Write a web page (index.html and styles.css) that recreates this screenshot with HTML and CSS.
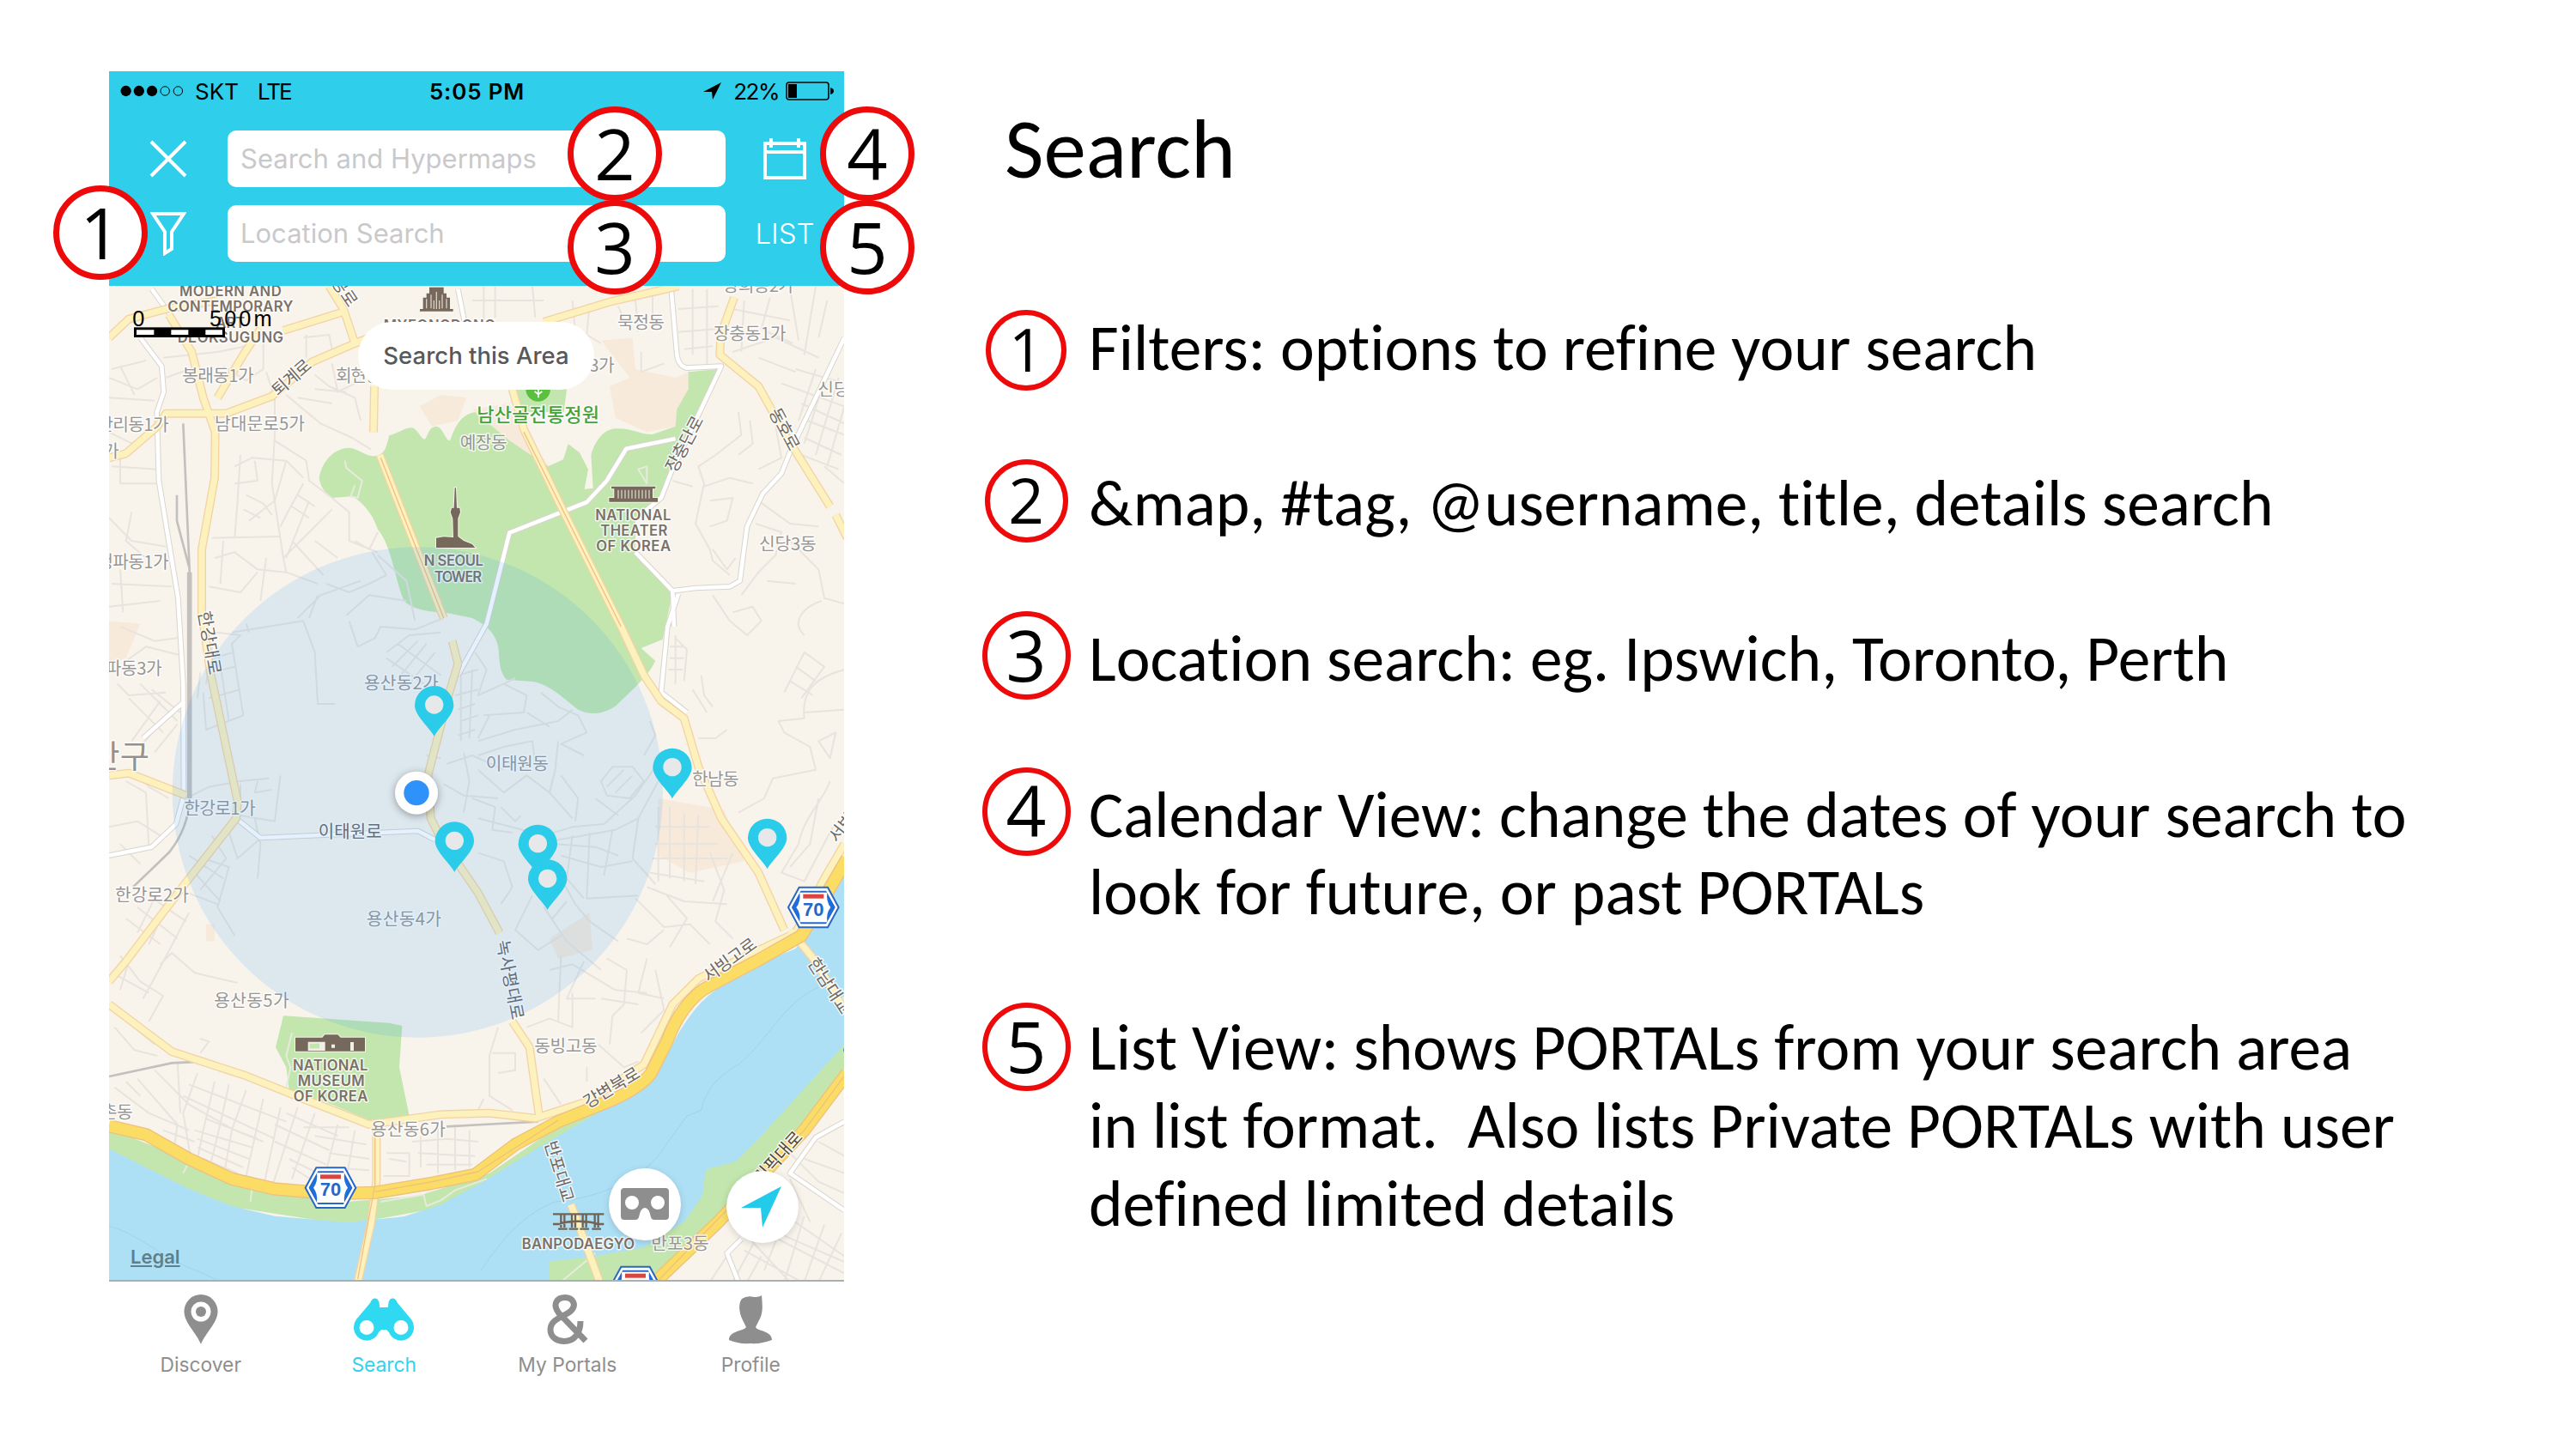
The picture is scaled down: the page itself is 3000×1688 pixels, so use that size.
FILE: index.html
```html
<!DOCTYPE html>
<html lang="en">
<head>
  <meta charset="UTF-8">
  <meta name="viewport" content="width=device-width, initial-scale=1.0">
  <title>Search</title>
  <link rel="stylesheet" href="styles.css">
</head>
<body>
  <div class="slide">
    <div class="phone">
      <div class="header">
        <div class="status-bar">
          <div class="carrier">
            <svg class="signal" width="74" height="14" viewBox="0 0 78 14">
              <circle cx="7" cy="7" r="6.500"/><circle cx="23" cy="7" r="6.500"/><circle cx="39" cy="7" r="6.500"/>
              <circle class="off" cx="55" cy="7" r="5.5"/><circle class="off" cx="71" cy="7" r="5.5"/>
            </svg>
            <span>SKT</span><span class="network">LTE</span>
          </div>
          <div class="time">5:05 PM</div>
          <div class="battery">
            <svg width="21" height="20" viewBox="0 0 21 20"><path d="M21 0 L0 11 L10 11 L11 20 Z"/></svg>
            <span>22%</span>
            <svg width="56" height="22" viewBox="0 0 56 22">
              <rect class="shell" x="1" y="1" width="49" height="20" rx="3"/>
              <rect x="3" y="3" width="10" height="16"/>
              <path d="M52 7 Q56 8 56 11 Q56 14 52 15 Z"/>
            </svg>
          </div>
        </div>
        <div class="search-row">
          <svg class="icon" width="46" height="46" viewBox="0 0 46 46"><path d="M3 3 L43 43 M43 3 L3 43"/></svg>
          <div class="search-input">Search and Hypermaps</div>
          <svg class="icon" width="50" height="50" viewBox="0 0 50 50">
            <path d="M2 7 H48 V47 H2 Z M2 17 H48 M9 1 V12 M41 1 V12"/>
          </svg>
        </div>
        <div class="search-row">
          <svg class="icon" width="42" height="52" viewBox="0 0 42 52"><path d="M3 3 H39 L25 24 V44 L17 49 V24 Z"/></svg>
          <div class="search-input">Location Search</div>
          <span class="list-btn">LIST</span>
        </div>
      </div>

      <div class="map">
        <svg width="856" height="1160" viewBox="21 9 2568 3480">
          <defs>
            <g id="pin">
              <path d="M0 0 C-12 -26 -68 -72 -68 -108 A68 68 0 0 1 68 -108 C68 -72 12 -26 0 0 Z"/>
              <circle cx="0" cy="-110" r="32" fill="#e6e8ea"/>
            </g>
            <g id="route70">
              <path d="M-88 0 L-50 -70 H50 L88 0 L50 70 H-50 Z" fill="#fff" stroke="#2a67c4" stroke-width="6"/>
              <path d="M-74 0 L-43 -56 H43 L74 0 L43 56 H-43 Z" fill="#1d6fe0" stroke="#2a67c4" stroke-width="4"/>
              <path d="M-48 -52 H48 Q44 -20 60 0 Q44 20 48 52 H-48 Q-44 20 -60 0 Q-44 -20 -48 -52 Z" fill="#fff"/>
              <rect x="-36" y="-46" width="72" height="15" fill="#d9463f"/>
              <text class="route-no" x="0" y="29">70</text>
            </g>
          </defs>

          <rect x="21" y="9" width="2568" height="3480" fill="#f8f4ec"/>

          <!-- built up areas -->
          <g class="area">
            <path d="M1105 430 L1180 390 L1270 400 L1240 480 L1150 500 Z"/>
            <path d="M1740 200 L1850 190 L1860 300 L2000 330 L2045 310 L2045 370 L2000 500 L1900 520 L1790 470 L1770 360 L1840 330 Z"/>
            <path d="M1410 550 L1290 440 L1420 420 L1500 560 L1560 640 L1480 620 Z"/>
            <path d="M21 1180 L130 1190 L80 1310 L21 1330 Z"/>
            <path d="M1940 1800 L2170 1840 L2240 2020 L2050 2060 L1940 2000 Z"/>
            <path d="M1560 2290 L1700 2200 L1710 2330 L1590 2360 Z"/>
            <path d="M360 2240 H390 V2300 H360 Z"/>
          </g>

          <!-- parks -->
          <g class="park">
            <path d="M755 680 C765 620 810 575 860 575 C890 578 910 598 940 604 C985 606 990 570 1000 532 C1030 525 1050 505 1080 505 C1100 510 1110 545 1125 545 C1140 520 1140 502 1165 500 C1190 505 1195 550 1212 550 C1225 520 1240 460 1300 450 L1420 550 L1480 590 L1555 640 L1608 616 L1625 562 L1665 592 L1695 650 L1682 720 L1712 716 L1705 600 C1715 560 1745 510 1790 508 C1850 505 1880 530 1920 528 L2000 500 L2005 440 L2045 370 L2045 310 L2150 300 L2080 460 L1980 660 L1945 750 L1860 830 L1860 940 L1970 1050 L1988 1090 L1955 1245 L1880 1275 L1930 1320 C1900 1380 1850 1420 1790 1478 C1740 1510 1700 1508 1660 1490 C1620 1460 1560 1400 1500 1392 L1410 1385 C1385 1360 1385 1320 1382 1280 C1375 1220 1330 1190 1290 1170 L1190 1150 C1130 1150 1075 1135 1052 1110 C1020 1040 1010 920 960 860 C940 800 900 760 870 745 L800 750 C775 730 760 715 755 680 Z"/>
            <path d="M1440 370 H1620 L1610 450 H1460 Z"/>
            <path d="M630 2560 L1000 2585 L1045 2595 L1035 2740 L1070 2910 L930 2925 L800 2870 L650 2820 L640 2740 L603 2670 Z"/>
            <path d="M21 2955 L290 3060 L440 3140 L620 3185 L850 3210 L1100 3190 L1350 3110 L1600 2940 L1870 2800 L1850 2840 L1500 3050 L1180 3230 L850 3290 L400 3220 L21 3040 Z"/>
            <path d="M2590 2600 L2250 2940 L2050 3060 L1900 3360 L1560 3400 V3490 H1930 L2200 3250 L2450 2960 L2590 2750 Z"/>
          </g>
          <path class="clearing" d="M1860 942 L1860 830 L1950 750 L1990 1070 L1970 1050 Z"/>

          <!-- Han river -->
          <path class="water" d="M21 3025 L140 3085 L300 3165 L450 3225 L600 3260 L850 3282 L1050 3262 L1180 3220 L1320 3145 L1490 3040 L1590 2980 L1850 2830 L1910 2780 L1990 2660 C2020 2600 2070 2520 2140 2470 L2290 2380 L2420 2325 L2460 2270 L2600 2030 V2650 L2290 2990 L2210 3070 L2110 3095 C2095 3130 2105 3160 2090 3195 L2030 3280 L1890 3370 L1690 3405 L1560 3418 V3490 H21 Z"/>
          <path class="contour" d="M21 3295 C120 3320 200 3400 300 3440 S380 3480 420 3490 M1320 3450 C1420 3300 1500 3240 1580 3210 C1800 3190 1930 3080 1960 3020 L2040 2910 L2090 2890 C2110 2800 2170 2760 2220 2730 C2330 2640 2370 2520 2500 2460"/>

          <!-- side streets -->
          <g class="street">
            <path d="M21 330 L120 370 L190 330 M21 400 L180 410 M60 290 L110 390 M30 300 L150 270 M210 260 L400 240 L500 220 M220 330 L330 290 M420 290 L500 340 L560 300 L560 180 M700 190 L790 180 L800 230 M710 180 V260 M570 310 L600 400 V530 L590 700 L630 960 L640 1010 L750 1050"/>
            <path d="M740 320 L790 360 L880 400 L900 480 M800 280 L820 380 L900 340 M740 370 L850 380 M640 390 L700 440 L760 490 L870 540 L935 580 M680 400 L800 420 M600 550 L710 620 L720 690 L800 750 L860 800 V900 L960 940"/>
            <path d="M460 640 L520 610 L640 620 L700 680 M480 600 L470 760 L460 890 M530 620 L540 690 L460 700 M640 620 L600 760 L510 830 M500 740 L560 770 L590 810 M490 790 L550 820 M700 700 L640 810 L620 850 M680 740 L740 780 M660 780 L720 820 M380 890 L620 885 M390 960 L460 940 L540 1000 L640 1010 M420 900 L410 1050 M370 1060 L480 1080 L540 1010 M570 960 L550 1110 M720 760 L640 960 M800 790 L690 900 L630 960 M740 900 L820 960 M660 900 L770 1020"/>
            <path d="M1090 1180 L1060 1040 L960 950 M900 1040 L760 1090 L680 1170 M940 940 L990 1020 L930 1050 L860 1080 L780 1050 M880 900 L930 930 L960 870 M1060 1110 L930 1090 L850 1160 M750 1090 L720 1170"/>
            <path d="M21 520 L100 560 L160 540 M30 640 L190 650 M60 600 V700 L190 700 M21 820 L100 900 L220 920 M100 800 L80 900 L150 960 M30 1050 L240 1060 M60 1000 L70 1150 M21 1130 L200 1110"/>
            <path d="M1290 60 H1540 M1330 10 V130 M1370 10 V120 M1500 10 L1510 120 M1640 60 L1650 170 M1700 70 L1690 180 L1740 210 M1800 80 L1820 130 M1860 60 L1870 170 M1920 30 V160 M2010 90 L2150 80 M2010 170 L2140 160 M2060 20 V250 M2110 20 V290 M2030 230 L2130 220 M2200 90 L2400 130 M2240 60 L2230 240 M2330 50 L2300 160 L2410 210 M2200 240 L2350 190 L2500 260 M2400 20 L2430 200 M2490 10 L2450 250 M2290 260 L2420 310 M2530 60 L2500 190 M1880 240 V310 L1960 280"/>
            <path d="M2370 350 L2590 430 M2420 300 L2590 350 M2440 420 L2590 490 M2460 480 L2590 530 M2450 540 L2580 600 M2440 600 L2570 650 M2490 300 L2430 480 M2530 310 L2450 560 M2570 330 L2490 600 M2590 430 L2530 640 M2520 640 L2590 700"/>
            <path d="M2220 450 L2230 530 L2140 600 L2080 640 L2100 700 L2070 840 L2120 930 L2130 970 L2190 1020 M2100 710 L2190 680 L2270 700 M2260 480 L2270 560 L2220 600 M2350 500 L2370 610 L2290 650 M2120 760 L2200 750 L2180 830 L2120 850 M2130 930 L2180 1000 L2210 960 M1990 690 L2060 710 M2280 840 L2370 870 L2350 950 L2290 1010 L2230 1090 M2290 760 L2400 840 L2500 850 M2130 1090 L2190 1180 L2250 1230 L2300 1180 L2270 1130 L2200 1150 M2400 900 L2500 1000 L2520 1100 L2590 1120 M2320 1040 L2420 1050 M2450 1230 C2400 1180 2450 1130 2510 1110"/>
            <path d="M2000 1240 L2040 1280 L2030 1390 M1980 1270 H2030 M1980 1310 H2030 M1975 1350 H2025 M2000 1230 V1400 M2090 1370 L2100 1440 L2130 1480 M2060 1420 L2110 1500 M2180 1560 L2140 1590 L2080 1590 M2380 1430 L2450 1290 L2520 1340 L2440 1450 M2400 1390 L2480 1440 M2420 1340 L2490 1390 M2590 1350 C2480 1380 2440 1430 2450 1520 L2360 1530 L2380 1570 L2470 1620 L2490 1700 L2340 1730 L2310 1800 L2220 1850 M2450 1500 L2590 1490 M2500 1600 L2560 1570 L2540 1660 Z M2540 1740 C2510 1820 2450 1860 2430 1960 L2370 2060 L2450 2090 L2550 1900 M2500 1800 L2470 1960 L2400 2040"/>
            <path d="M60 1200 L180 1250 L260 1240 M80 1320 L150 1270 L270 1300 M50 1400 L90 1440 L220 1430 M130 1400 L260 1530 M90 1450 L210 1570 M170 1420 L270 1500 M240 1490 L130 1620 M200 1460 L100 1600 M260 1540 L180 1640 M100 1700 L160 1760 L230 1800 M80 1740 L150 1780 L160 1970 M21 1900 L120 1880 L200 1930 M60 1960 L130 2030"/>
            <path d="M360 1400 L390 1220 L480 1230 L450 1260 L490 1510 L360 1560 L350 1430 M370 1450 L480 1420 M380 1360 L460 1340 M385 1310 L455 1290 M400 1270 L440 1530 M330 1450 L340 1360"/>
            <path d="M450 1220 L700 1180 L740 1290 L750 1470 L810 1470 M500 1190 L510 1220 M860 1180 L890 1270 L950 1240 L970 1200 L1090 1210 L1190 1170 M990 1290 L1070 1230 L1180 1220 M1010 1340 L1100 1250 M1040 1370 L1130 1260 M1070 1400 L1160 1290 M990 1310 L1120 1400 M1030 1260 L1180 1370"/>
            <path d="M1240 1370 L1310 1350 M1230 1440 L1310 1420 M1240 1490 L1300 1470 M1250 1530 L1310 1510 M1240 1580 L1300 1560 M1250 1370 V1600 M1290 1350 L1280 1590 M1200 1680 L1290 1650 L1400 1700 M1190 1750 L1260 1790 L1380 1800 M1260 1640 L1280 1740 L1260 1850 M1180 1660 L1130 1650"/>
            <path d="M1300 1290 L1340 1350 L1310 1440 L1400 1400 L1480 1440 L1470 1500 L1330 1510 M1400 1400 L1440 1380 M1530 1430 L1590 1480 L1660 1510 L1690 1570 L1600 1610 L1680 1650 M1310 1600 L1440 1560 L1590 1530 L1640 1490 M1350 1510 L1310 1590 M1480 1500 L1560 1550 M1310 1650 L1400 1620 L1500 1600 L1510 1680 M1590 1600 L1580 1700 L1560 1780 L1640 1870 M1600 1720 L1660 1800 L1650 1880 M1560 1780 L1480 1720 L1400 1780 L1310 1700"/>
            <path d="M1740 1740 L1780 1690 L1850 1690 L1890 1740 L1840 1800 L1760 1790 Z M1760 1760 L1820 1700 M1790 1780 L1850 1720 M1930 1690 L1860 1790 L1750 1890 L1640 1900 L1540 1930 L1310 1870 M1940 1740 L1870 1870 L1790 1910 L1680 1930 L1560 1950 M1720 1800 L1800 1860 M1910 1530 L1930 1580 L1890 1650"/>
            <path d="M1290 1800 L1370 1830 L1360 1910 L1430 1920 M1390 1830 L1440 1880 L1460 1860 M1580 1960 L1720 1970 L1800 2000 M1600 2000 L1740 2040 L1850 2020 M1640 1930 L1620 2080 L1680 2150 M1700 1920 L1690 2150 L1870 2140 M1780 1910 L1750 2070 M1870 1870 L1850 2010 L1930 2100 M1310 1990 L1400 2020 L1430 2110 L1390 2170 M1600 2080 L1650 2170 L1700 2230 L1800 2300 M1500 2140 L1440 2260 L1520 2330 L1600 2280 M1540 2180 L1620 2300 L1740 2400 M1620 2160 L1570 2220"/>
            <path d="M1940 1830 V2090 M1980 1830 V2080 M2030 1850 V2090 M2080 1860 L2070 2100 M1930 1900 H2120 M1930 1960 H2150 M1920 2010 H2180 M1910 2060 L2100 2090 M1900 2110 L2030 2160 L2180 2170 M2120 1990 L2170 2120 L2140 2230 L2200 2290 M2200 1990 L2130 2160 M1860 2150 L1960 2250 L2050 2240 L2120 2310 M1970 2140 L2040 2220 L1980 2320 M1830 2290 L1900 2310 L1960 2260"/>
            <path d="M1560 2400 L1640 2380 L1790 2470 L1900 2480 M1600 2350 L1590 2580 M1680 2370 L1620 2500 L1720 2500 M1760 2360 L1830 2400 L1820 2520 L1780 2560 L1770 2660 M1900 2360 L1870 2480 L1960 2500 M1930 2400 L1960 2540 L1880 2620 M1640 2480 V2600 L1560 2570 L1480 2600 M1380 2600 L1350 2700 V2840 L1430 2890 M1360 2690 L1440 2690 V2750 L1380 2760 M1540 2780 L1600 2870 M1690 2740 V2790 M1730 2660 L1820 2740 L1870 2720 M1740 2500 L1870 2520"/>
            <path d="M290 1800 L370 1760 L480 1740 L580 1730 M480 1750 V1860 L600 1880 L620 1720 M540 1740 L530 1780 L590 1770 M530 1870 L550 1960 L540 2080 M440 1920 L470 2010 L550 1940 M380 1930 L430 2010 L340 2120 M300 2000 L420 2080 M320 2060 L410 2160 M350 2010 L440 2040 L400 2180 L460 2280 M270 2120 L400 2170"/>
            <path d="M80 2220 L200 2310 M120 2180 L260 2290 M160 2140 L290 2230 M200 2110 L120 2270 M250 2120 L160 2310 M300 2200 L200 2390 L140 2500 M60 2350 L130 2440 L210 2490 L160 2580 M50 2420 L160 2480 M90 2370 L60 2470 M200 2380 L240 2340 L320 2410 L470 2445"/>
          </g>
          <g class="street">
            <path d="M40 2600 L110 2680 L190 2700 M60 2560 L180 2660 M340 2640 L370 2650 L340 2690 M120 2780 L260 2940 L250 3010 M180 2750 L300 2870 L460 2960 L560 3000 M260 2720 L270 2900 M330 2760 L280 2900 L310 3080 M390 2790 L350 2960 L330 3060 M440 2800 L400 2980 L370 3100 M500 2820 L450 2960 L420 3130 M560 2850 L500 3120 M620 2880 L560 3160 M680 2880 L590 3160 M740 2900 L660 3130 M820 2940 L760 3180 M880 2960 L850 3130"/>
            <path d="M300 2800 L640 2930 M280 2840 L600 2990 M330 2990 L510 3060 M330 3020 L490 3090 M320 2960 L520 3020 M350 3060 L470 3110 M360 2920 L540 2990 M640 2900 L820 2980 M600 2940 L790 3030 M600 3000 L780 3080 M650 3060 L750 3110 M660 3090 L740 3140 M740 2980 L920 3010 M790 3040 L930 3060 M780 3090 L930 3100 M700 2950 L860 2950 M40 2810 L160 2900 L300 2960 M80 2790 L130 2840 M210 2960 L320 3000"/>
            <path d="M990 3040 H1070 V3120 H980 M1080 3000 L1200 2990 L1310 3000 M1100 3040 L1300 3050 M1130 3080 H1290 M1110 2980 V3090 M1170 2950 V3110 M1230 2940 V3100 M1280 2960 V3090 M1000 3060 L1060 3070 M1310 2890 L1330 2850"/>
            <path d="M2300 3120 L2360 3240 L2590 3400 M2400 3130 L2470 3280 M2450 3060 L2590 3110 M2500 3000 L2590 3050 M2340 3230 L2200 3490 M2250 3330 L2400 3490 M2400 3220 L2310 3450 M2450 3260 L2380 3490 M2520 3290 L2450 3490 M2580 3320 L2500 3490 M2280 3300 L2590 3460 M2240 3380 L2440 3490 M2180 3400 L2120 3490 M2300 3400 L2250 3490 M2360 3320 L2590 3420 M2400 3040 L2500 3140 L2590 3180"/>
          </g>
          <path class="trail" d="M845 620 L850 645 L905 690 L890 750 L865 745 L880 705 M660 2620 L640 2700 L655 2740 L640 2810 M300 3070 L280 3110 M520 3165 L515 3210 M970 3210 L1120 3185 L1130 3225 L1180 3205 L1230 3170 L1340 3130 M1870 650 L1900 700 V640 Z M1600 3490 L1720 3390"/>

          <!-- railway -->
          <path class="rail" d="M280 490 L302 1000 V1800 C300 1880 270 1940 230 1990 L105 2110 M258 740 V830 L300 990 M21 2772 L240 2725 L350 2720 L640 2820 L930 2940 M1200 2947 L1330 2940 L1520 2930"/>
          <path class="rail main" d="M302 1010 V1800"/>

          <!-- white roads -->
          <defs>
            <path id="white" d="M170 20 L235 110 M130 190 L205 290 L212 380 L188 450 L195 690 L262 1100 L280 1400 L282 1790 L255 1890 L170 1970 L21 2000 M1240 20 L1262 130
              M1985 20 L2005 250 Q2010 290 2040 296 L2160 290 L2080 460 L1985 660 L1950 750 L1890 800
              M2000 543 L1828 578 L1760 690 L1690 765 L1420 872 L1340 1190 L1240 1370
              M2590 190 L2400 590 L2370 665 L2305 735 L2250 850 L2225 1040 L2190 1060 L2070 1065 L1990 1075 L1860 940 M2010 1085 L1972 1200 L1950 1430 L2040 1500 M1990 1075 L1995 1200
              M465 1870 L550 1938 L1100 1914 L1160 1945 M140 1590 L285 1460
              M2590 2930 L2490 2985 L2400 3110 L2590 3240 M2230 3340 L2180 3390 L2220 3490"/>
          </defs>
          <use href="#white" class="white-casing"/>
          <use href="#white" class="white-fill"/>

          <!-- yellow roads -->
          <defs>
            <g id="yellow">
              <path d="M21 190 L90 125 L220 90 L400 60 M230 110 L310 240 L350 400 L392 520 L390 680 L345 930 V1150 L375 1360 L470 1810 L465 1870 L285 2100 L80 2370 L21 2440"/>
              <path d="M21 610 L80 595 L190 500 L220 455 H430 L590 395 L730 275 L880 210 L930 190 M880 210 L840 90 L790 10 M630 165 L840 100 M550 160 L490 250 L400 400"/>
              <path d="M948 360 L945 520 M967 600 L1190 1170 M1220 1250 L1240 1330 M1430 370 L1470 510 L1610 800 L1810 1200 L1890 1370 L1950 1460 L2030 1520 L2080 1690 L2160 1870 L2290 2060 L2380 2260"/>
              <path d="M1540 135 L1770 65 L2010 10 M2205 50 L2158 180 L2155 250 L2290 360 L2390 540 L2540 780 M2560 810 L2600 890"/>
              <path d="M21 2520 L240 2685 L500 2770 L700 2850 L930 2940 L1180 2905 L1350 2900 L1510 2918 L1690 2860 L1890 2730 L1990 2520 L2080 2430 L2250 2350 L2420 2270 L2520 2080 L2590 1960"/>
              <path d="M955 2940 V3140 L935 3290 L890 3490 M1430 2580 L1490 2670 L1525 2920 M1635 3220 L1735 3490"/>
              <path d="M1240 1330 L1210 1430 L1135 1720 L1145 1870 L1180 1940 L1310 2130 L1385 2270 M21 1720 L90 1712 L290 1790 M2400 2260 L2490 2370 L2590 2540"/>
            </g>
            <path id="highway" d="M21 2945 L150 2975 L300 3060 L450 3130 L600 3165 L800 3182 L950 3178 L1150 3145 L1300 3115 L1440 3010 L1590 2930 L1740 2870 Q1870 2820 1915 2760 L1970 2650 C2000 2570 2050 2490 2120 2455 L2290 2365 L2440 2280 L2530 2130 L2600 2010 M2600 2760 L2450 2960 L2150 3280 L1930 3490"/>
          </defs>
          <use href="#yellow" class="yellow-casing"/>
          <use href="#yellow" class="yellow-fill"/>
          <use href="#highway" class="highway-casing"/>
          <use href="#highway" class="highway-fill"/>
          <path class="divider" d="M970 610 L1190 1170 M1470 520 L1810 1200 M950 2960 V3150 L890 3480 M950 3175 L1150 3140 L1310 3105 L1590 2925 M2590 2770 L2450 2960 L1935 3490"/>

          <!-- landmarks -->
          <g class="landmark">
            <path d="M1107 98 V90 H1118 V50 H1130 V35 H1140 V14 H1190 V35 H1200 V50 H1212 V90 H1223 V98 Z"/>
            <path d="M1229 715 L1233 715 L1236 785 H1246 L1248 800 L1240 822 V885 L1260 900 L1290 912 L1300 924 H1164 V890 L1190 886 L1224 888 L1222 822 L1214 800 L1218 785 H1226 Z"/>
            <path d="M1776 710 H1930 V718 H1920 V750 H1938 V764 H1768 V750 H1786 V718 H1776 Z"/>
            <path d="M672 2684 V2636 H766 L775 2626 H820 L830 2636 H915 V2684 Z"/>
          </g>
          <g class="landmark-detail">
            <path d="M1130 55 V88 M1146 40 V88 M1156 60 V90 M1165 30 V90 M1175 60 V90 M1185 40 V88 M1200 55 V88"/>
            <path d="M1800 722 V752 M1812 722 V752 M1824 722 V752 M1836 722 V752 M1848 722 V752 M1860 722 V752 M1872 722 V752 M1884 722 V752 M1896 722 V752 M1908 722 V752"/>
          </g>
          <path class="bridge" d="M1572 3253 H1750 M1572 3288 H1592 C1630 3275 1690 3275 1730 3288 H1750 M1600 3253 V3300 M1612 3253 V3300 M1638 3253 V3300 M1650 3253 V3300 M1676 3253 V3300 M1688 3253 V3300 M1718 3253 V3300 M1730 3253 V3300 M1590 3305 H1622 M1628 3305 H1660 M1666 3305 H1698 M1708 3305 H1740"/>
          <path d="M716 2651 H776 V2682 H716 Z M798 2660 H810 V2672 H798 Z M864 2652 H876 V2682 H864 Z" fill="#f0efe6"/>
          <path d="M722 2657 H756 V2674 H722 Z" fill="#c2e6ae"/>
          <circle cx="1520" cy="370" r="43" fill="#5bbf3f"/>
          <path d="M1521 365 V400 M1508 378 L1521 388 L1534 378" fill="none" stroke="#fff" stroke-width="5"/>

          <!-- place names -->
          <g class="poi">
            <text x="445" y="45" textLength="356">MODERN AND</text>
            <text x="445" y="100" textLength="438">CONTEMPORARY</text>
            <text x="445" y="155">ART</text>
            <text x="445" y="208" textLength="370">DEOKSUGUNG</text>
            <text x="1175" y="166" textLength="390">MYEONGDONG</text>
            <text x="1225" y="988" textLength="208">N SEOUL</text>
            <text x="1240" y="1043" textLength="166">TOWER</text>
            <text x="1852" y="828" textLength="264">NATIONAL</text>
            <text x="1855" y="882" textLength="234">THEATER</text>
            <text x="1853" y="937" textLength="260">OF KOREA</text>
            <text x="794" y="2750" textLength="262">NATIONAL</text>
            <text x="797" y="2805" textLength="234">MUSEUM</text>
            <text x="795" y="2860" textLength="260">OF KOREA</text>
            <text x="1660" y="3374" textLength="394">BANPODAEGYO</text>
          </g>
          <g class="dong">
            <text x="277" y="344" textLength="250">봉래동1가</text>
            <text x="-20" y="517" textLength="250">만리동1가</text>
            <text x="0" y="610">가</text>
            <text x="390" y="512" textLength="315">남대문로5가</text>
            <text x="813" y="344" textLength="160">회현동</text>
            <text x="1247" y="580" textLength="165">예장동</text>
            <text x="-20" y="995" textLength="250">청파동1가</text>
            <text x="1797" y="160" textLength="165">묵정동</text>
            <text x="2165" y="30" textLength="250">광희동2가</text>
            <text x="2133" y="198" textLength="253">장충동1가</text>
            <text x="1645" y="308" textLength="142">동3가</text>
            <text x="2497" y="392">신당동</text>
            <text x="2292" y="934" textLength="200">신당3동</text>
            <text x="8" y="1368" textLength="198">파동3가</text>
            <text x="912" y="1420" textLength="260">용산동2가</text>
            <text x="283" y="1856" textLength="250">한강로1가</text>
            <text x="42" y="2160" textLength="258">한강로2가</text>
            <text x="920" y="2245" textLength="262">용산동4가</text>
            <text x="1337" y="1700" textLength="220">이태원동</text>
            <text x="2058" y="1754" textLength="164">한남동</text>
            <text x="388" y="2530" textLength="262">용산동5가</text>
            <text x="935" y="2980" textLength="262">용산동6가</text>
            <text x="-6" y="2918" textLength="110">촌동</text>
            <text x="1507" y="2688" textLength="220">동빙고동</text>
            <text x="1915" y="3378" textLength="202">반포3동</text>
          </g>
          <text class="district" x="-44" y="1695">산구</text>
          <text class="park-name" x="1306" y="484" textLength="428">남산골전통정원</text>
          <g class="road-name">
            <text transform="translate(612 398) rotate(-41)" textLength="160">퇴계로</text>
            <text transform="translate(765 -50) rotate(56)">소공로</text>
            <text transform="translate(2000 665) rotate(-62)" textLength="212">장충단로</text>
            <text transform="translate(2325 450) rotate(62)" textLength="158">동호로</text>
            <text transform="translate(332 1150) rotate(80)" textLength="224">한강대로</text>
            <text x="752" y="1938" textLength="222">이태원로</text>
            <text transform="translate(1375 2300) rotate(79)" textLength="282">녹사평대로</text>
            <text transform="translate(2115 2445) rotate(-36)" textLength="215">서빙고로</text>
            <text transform="translate(2565 1958) rotate(-52)">서빙고</text>
            <text transform="translate(1694 2885) rotate(-31)" textLength="218">강변북로</text>
            <text transform="translate(1542 3005) rotate(73)" textLength="220">반포대교</text>
            <text transform="translate(2460 2375) rotate(57)" textLength="220">한남대교</text>
            <text class="dark" transform="translate(2300 3150) rotate(-48)" textLength="220">림픽대로</text>
          </g>

          <circle class="radius" cx="1099" cy="1779" r="857"/>

          <!-- markers -->
          <use href="#route70" x="795" y="3161"/>
          <use href="#route70" x="2482" y="2181"/>
          <use href="#route70" x="1860" y="3507"/>
          <circle cx="2605" cy="2680" r="18" fill="#2a67c4"/>
          <g class="pins">
            <use href="#pin" x="1157" y="1583"/>
            <use href="#pin" x="1228" y="2058"/>
            <use href="#pin" x="1519" y="2068"/>
            <use href="#pin" x="1553" y="2190"/>
            <use href="#pin" x="1989" y="1801"/>
            <use href="#pin" x="2321" y="2047"/>
          </g>
          <circle class="me" cx="1095" cy="1781" r="75"/>
          <circle cx="1095" cy="1781" r="44" fill="#2f92fb"/>

          <!-- scale bar -->
          <g class="scale">
            <text x="103" y="150">0</text>
            <text x="372" y="150" textLength="218">500m</text>
            <rect x="108" y="154" width="318" height="35"/>
            <path d="M117 163 H178 V180 H117 Z M238 163 H298 V180 H238 Z M358 163 H417 V180 H358 Z" fill="#fff"/>
          </g>
        </svg>
        <div class="search-area">Search this Area</div>
        <a class="legal">Legal</a>
        <div class="map-btn vr-btn">
          <svg width="56" height="38" viewBox="0 0 56 38">
            <path fill="#8e8e8e" fill-rule="evenodd" d="M4 0 H52 Q56 0 56 4 V33 Q56 37 52 37 H39 Q36 37 35 34 Q33 23 28 23 Q23 23 21 34 Q20 37 17 37 H4 Q0 37 0 33 V4 Q0 0 4 0 Z M13 9 A8 8 0 1 0 13 25 A8 8 0 1 0 13 9 Z M43 9 A8 8 0 1 0 43 25 A8 8 0 1 0 43 9 Z"/>
          </svg>
        </div>
        <div class="map-btn locate-btn">
          <svg width="47" height="48" viewBox="0 0 47 48"><path fill="#22cbea" d="M47 0 L0 25 L23 25 L25 48 Z"/></svg>
        </div>
      </div>

      <div class="tab-bar">
        <div class="tab">
          <svg width="40" height="58" viewBox="0 0 40 58">
            <path fill-rule="evenodd" d="M20 0 A19.500 19.500 0 0 0 .5 20 C.5 33 15 45 20 58 C25 45 39.500 33 39.500 20 A19.500 19.500 0 0 0 20 0 Z M20 8.500 A11.500 11.500 0 1 1 20 31.500 A11.500 11.500 0 1 1 20 8.500 Z"/>
            <circle cx="20" cy="20" r="6"/>
          </svg>
          <span>Discover</span>
        </div>
        <div class="tab active">
          <svg width="70" height="58" viewBox="0 0 70 58">
            <path fill-rule="evenodd" d="M19 10 Q22 3 27 5 Q30 7 30 15 H40 Q40 7 43 5 Q48 3 51 10 L67 29 Q70 33 70 38 A15 15 0 0 1 41 44 L38 41 H32 L29 44 A15 15 0 0 1 0 38 Q0 33 3 29 Z M15 30 A8.500 8.500 0 1 0 15 47 A8.500 8.500 0 1 0 15 30 Z M55 30 A8.500 8.500 0 1 0 55 47 A8.500 8.500 0 1 0 55 30 Z"/>
          </svg>
          <span>Search</span>
        </div>
        <div class="tab">
          <svg width="48" height="58" viewBox="0 0 48 58">
            <path class="amp" d="M45 54 L14 22 C5 10 13 3.500 21 3.500 C30 3.500 35 12 28 19 C22 25 4 28 4 41 C4 50 12 54.500 20 54.500 C32 54.500 39 45 39 31"/>
          </svg>
          <span>My Portals</span>
        </div>
        <div class="tab">
          <svg width="52" height="58" viewBox="0 0 52 58">
            <path d="M39 1 C40 12 41 22 36 30 L32 38 C34 43 51 42 51 53 Q38 58 26 57 Q12 58 1 53 C1 42 18 43 21 38 L17 30 C12 20 12 10 16 5 Q22 1 30 3 Q36 3 39 1 Z"/>
          </svg>
          <span>Profile</span>
        </div>
      </div>

      <div class="badge callout c1">1</div>
      <div class="badge callout c2">2</div>
      <div class="badge callout c3">3</div>
      <div class="badge callout c4">4</div>
      <div class="badge callout c5">5</div>
    </div>

    <div class="notes">
      <h1>Search</h1>
      <ul>
        <li><div class="badge b1">1</div><p>Filters: options to refine your search</p></li>
        <li><div class="badge b2">2</div><p>&amp;map, #tag, @username, title, details search</p></li>
        <li><div class="badge b3">3</div><p>Location search: eg. Ipswich, Toronto, Perth</p></li>
        <li><div class="badge b4">4</div><p>Calendar View: change the dates of your search to<br>look for future, or past PORTALs</p></li>
        <li><div class="badge b5">5</div><p>List View: shows PORTALs from your search area<br>in list format.&nbsp; Also lists Private PORTALs with user<br>defined limited details</p></li>
      </ul>
    </div>
  </div>
</body>
</html>
```

FILE: styles.css
```css
* {
  box-sizing: border-box;
}
body {
  margin: 0;
  background: #fff;
  font-family: Inter, "Liberation Sans", sans-serif;
}
.slide {
  display: flex;
  width: 3000px;
  height: 1688px;
  overflow: hidden;
}

/* phone */
.phone {
  position: relative;
  width: 856px;
  margin: 83px 0 0 127px;
}
.header {
  height: 250px;
  background: #2fceeb;
}
.status-bar {
  display: grid;
  grid-template-columns: 1fr auto 1fr;
  align-items: center;
  height: 46px;
  padding: 0 12px 0 13px;
  font-size: 26px;
}
.carrier,
.battery {
  display: flex;
  align-items: center;
}
.signal {
  margin-right: 13px;
}
.signal .off {
  fill: none;
  stroke: #000;
  stroke-width: 1;
}
.network {
  margin-left: 22px;
  letter-spacing: -2px;
}
.time {
  font-weight: 600;
  letter-spacing: 0.8px;
}
.battery {
  justify-content: flex-end;
  letter-spacing: -1.5px;
}
.battery span {
  margin: 0 8px 0 14px;
}
.shell {
  fill: none;
  stroke: #000;
  stroke-width: 1.5;
}
.search-row {
  display: grid;
  grid-template-columns: 138px 580px 138px;
  align-items: center;
  justify-items: center;
  height: 66px;
  margin-top: 23px;
}
.search-row + .search-row {
  margin-top: 21px;
}
.search-input {
  width: 580px;
  height: 66px;
  padding-left: 15px;
  border-radius: 10px;
  background: #fff;
  color: #c9c9cb;
  font-size: 31px;
  line-height: 66px;
}
.icon {
  fill: none;
  stroke: #fff;
  stroke-width: 4;
}
.list-btn {
  color: #fff;
  font-size: 33px;
  font-weight: 300;
}

/* map */
.map {
  position: relative;
  height: 1160px;
  border-bottom: 2px solid #a8b0b4;
  overflow: hidden;
}
.map > svg {
  display: block;
  font-family: "Noto Sans CJK KR", sans-serif;
}
.area { fill: #f8eadb; }
.park { fill: #c2e6ae; }
.clearing { fill: #f8f4ec; }
.water { fill: #aee0f5; }
.contour,
.street,
.trail,
.rail,
.bridge,
.divider,
.white-casing,
.white-fill,
.yellow-casing,
.yellow-fill,
.highway-casing,
.highway-fill {
  fill: none;
  stroke-linejoin: round;
}
.contour { stroke: #a0d3e8; stroke-width: 3; }
.street { stroke: #e8e3dc; stroke-width: 6; }
.trail { stroke: #e6ebdc; stroke-width: 6; }
.rail { stroke: #c3c0bd; stroke-width: 8; }
.rail.main { stroke-width: 17; }
.bridge { stroke: #6f6456; stroke-width: 7; }
.white-casing { stroke: #d9d4ce; stroke-width: 20; }
.white-fill { stroke: #fff; stroke-width: 14; }
.yellow-casing { stroke: #f3d3a4; stroke-width: 30; }
.yellow-fill { stroke: #fdf1bd; stroke-width: 22; }
.highway-casing { stroke: #efc07f; stroke-width: 46; }
.highway-fill { stroke: #fbdd66; stroke-width: 38; }
.divider { stroke: #eec083; stroke-width: 4; }
.landmark {
  fill: #76695c;
  stroke: #f6f3ea;
  stroke-width: 6;
  paint-order: stroke;
}
.landmark-detail {
  fill: none;
  stroke: #d8cfc4;
  stroke-width: 4;
}
.poi,
.dong,
.district,
.park-name,
.road-name {
  stroke: rgba(255, 255, 255, 0.8);
  stroke-width: 9;
  stroke-linejoin: round;
  paint-order: stroke;
}
.poi {
  fill: #7b7168;
  font: 600 50px Inter, sans-serif;
  text-anchor: middle;
}
.dong {
  fill: #989694;
  font-size: 61px;
}
.district {
  fill: #96918c;
  font-size: 112px;
}
.park-name {
  fill: #45a33a;
  font-size: 66px;
  font-weight: 500;
}
.road-name {
  fill: #6d6a67;
  font-size: 60px;
}
.road-name .dark {
  fill: #4d4843;
}
.route-no {
  fill: #2467c9;
  font: bold 66px "Liberation Sans", sans-serif;
  text-anchor: middle;
}
.radius {
  fill: rgba(31, 144, 255, 0.12);
}
.pins {
  fill: #2accea;
}
.me {
  fill: #fff;
  filter: drop-shadow(0 6px 14px rgba(0, 0, 0, 0.35));
}
.scale {
  font-size: 76px;
  font-family: "Liberation Sans", sans-serif;
}
.search-area {
  position: absolute;
  top: 42px;
  left: 290px;
  width: 275px;
  height: 79px;
  border-radius: 40px;
  background: #fff;
  color: #58585a;
  font-size: 27.500px;
  font-weight: 500;
  line-height: 79px;
  text-align: center;
}
.legal {
  position: absolute;
  left: 25px;
  bottom: 14px;
  color: #5f7f8b;
  font-size: 22px;
  font-weight: 600;
  text-decoration: underline;
}
.map-btn {
  position: absolute;
  display: flex;
  align-items: center;
  justify-content: center;
  width: 84px;
  height: 84px;
  border-radius: 50%;
  background: #fff;
  box-shadow: 0 2px 8px rgba(0, 0, 0, 0.15);
}
.vr-btn {
  left: 582px;
  top: 1028px;
}
.locate-btn {
  left: 719px;
  top: 1031px;
}
.locate-btn svg {
  margin: 0 4px 0 0;
}

/* tab bar */
.tab-bar {
  display: grid;
  grid-template-columns: repeat(4, 213.500px);
  height: 125px;
  padding-top: 15px;
}
.tab {
  display: flex;
  flex-direction: column;
  align-items: center;
  color: #8e8e8e;
  fill: #8e8e8e;
  font-size: 22.800px;
}
.tab span {
  margin-top: 10px;
}
.tab.active {
  color: #2fd3ee;
  fill: #2fd9f2;
}
.amp {
  fill: none;
  stroke: #8e8e8e;
  stroke-width: 7;
}

/* numbered badges */
.badge {
  display: flex;
  align-items: center;
  justify-content: center;
  padding-bottom: 4px;
  border: 6px solid #ec0a0a;
  border-radius: 50%;
  background: #fff;
  color: #000;
  font-family: "Open Sans", sans-serif;
  font-weight: 500;
  line-height: 1;
}
.callout {
  position: absolute;
  width: 110px;
  height: 110px;
  border-width: 7px;
  font-size: 83px;
}
.c1 { left: -65px; top: 133px; }
.c2 { left: 534px; top: 41px; }
.c3 { left: 534px; top: 150px; }
.c4 { left: 828px; top: 41px; }
.c5 { left: 828px; top: 150px; }

/* notes */
.notes {
  margin: 115px 0 0 163px;
  font-family: Carlito, Calibri, Lato, sans-serif;
  font-variant-ligatures: none;
}
h1 {
  margin: 0 0 127px 24px;
  font-size: 99px;
  font-weight: normal;
  line-height: 118px;
}
ul {
  margin: 0;
  padding: 0;
  list-style: none;
}
li {
  display: grid;
  grid-template-columns: 98px auto;
  column-gap: 24px;
  justify-items: center;
  align-items: start;
  margin-bottom: 90.600px;
}
li p {
  justify-self: start;
  margin: 0;
  font-size: 75.400px;
  line-height: 90.600px;
  white-space: nowrap;
}
li .badge {
  margin-bottom: -14px;
}
.b1 { width: 94px; height: 94px; margin-top: 1px; font-size: 70px; }
.b2 { width: 97px; height: 97px; margin-top: -6px; font-size: 73px; }
.b3,
.b4,
.b5 { width: 103px; height: 103px; font-size: 82px; }
.b3,
.b4 { margin-top: -10px; }
.b5 { margin-top: -7px; }
```
